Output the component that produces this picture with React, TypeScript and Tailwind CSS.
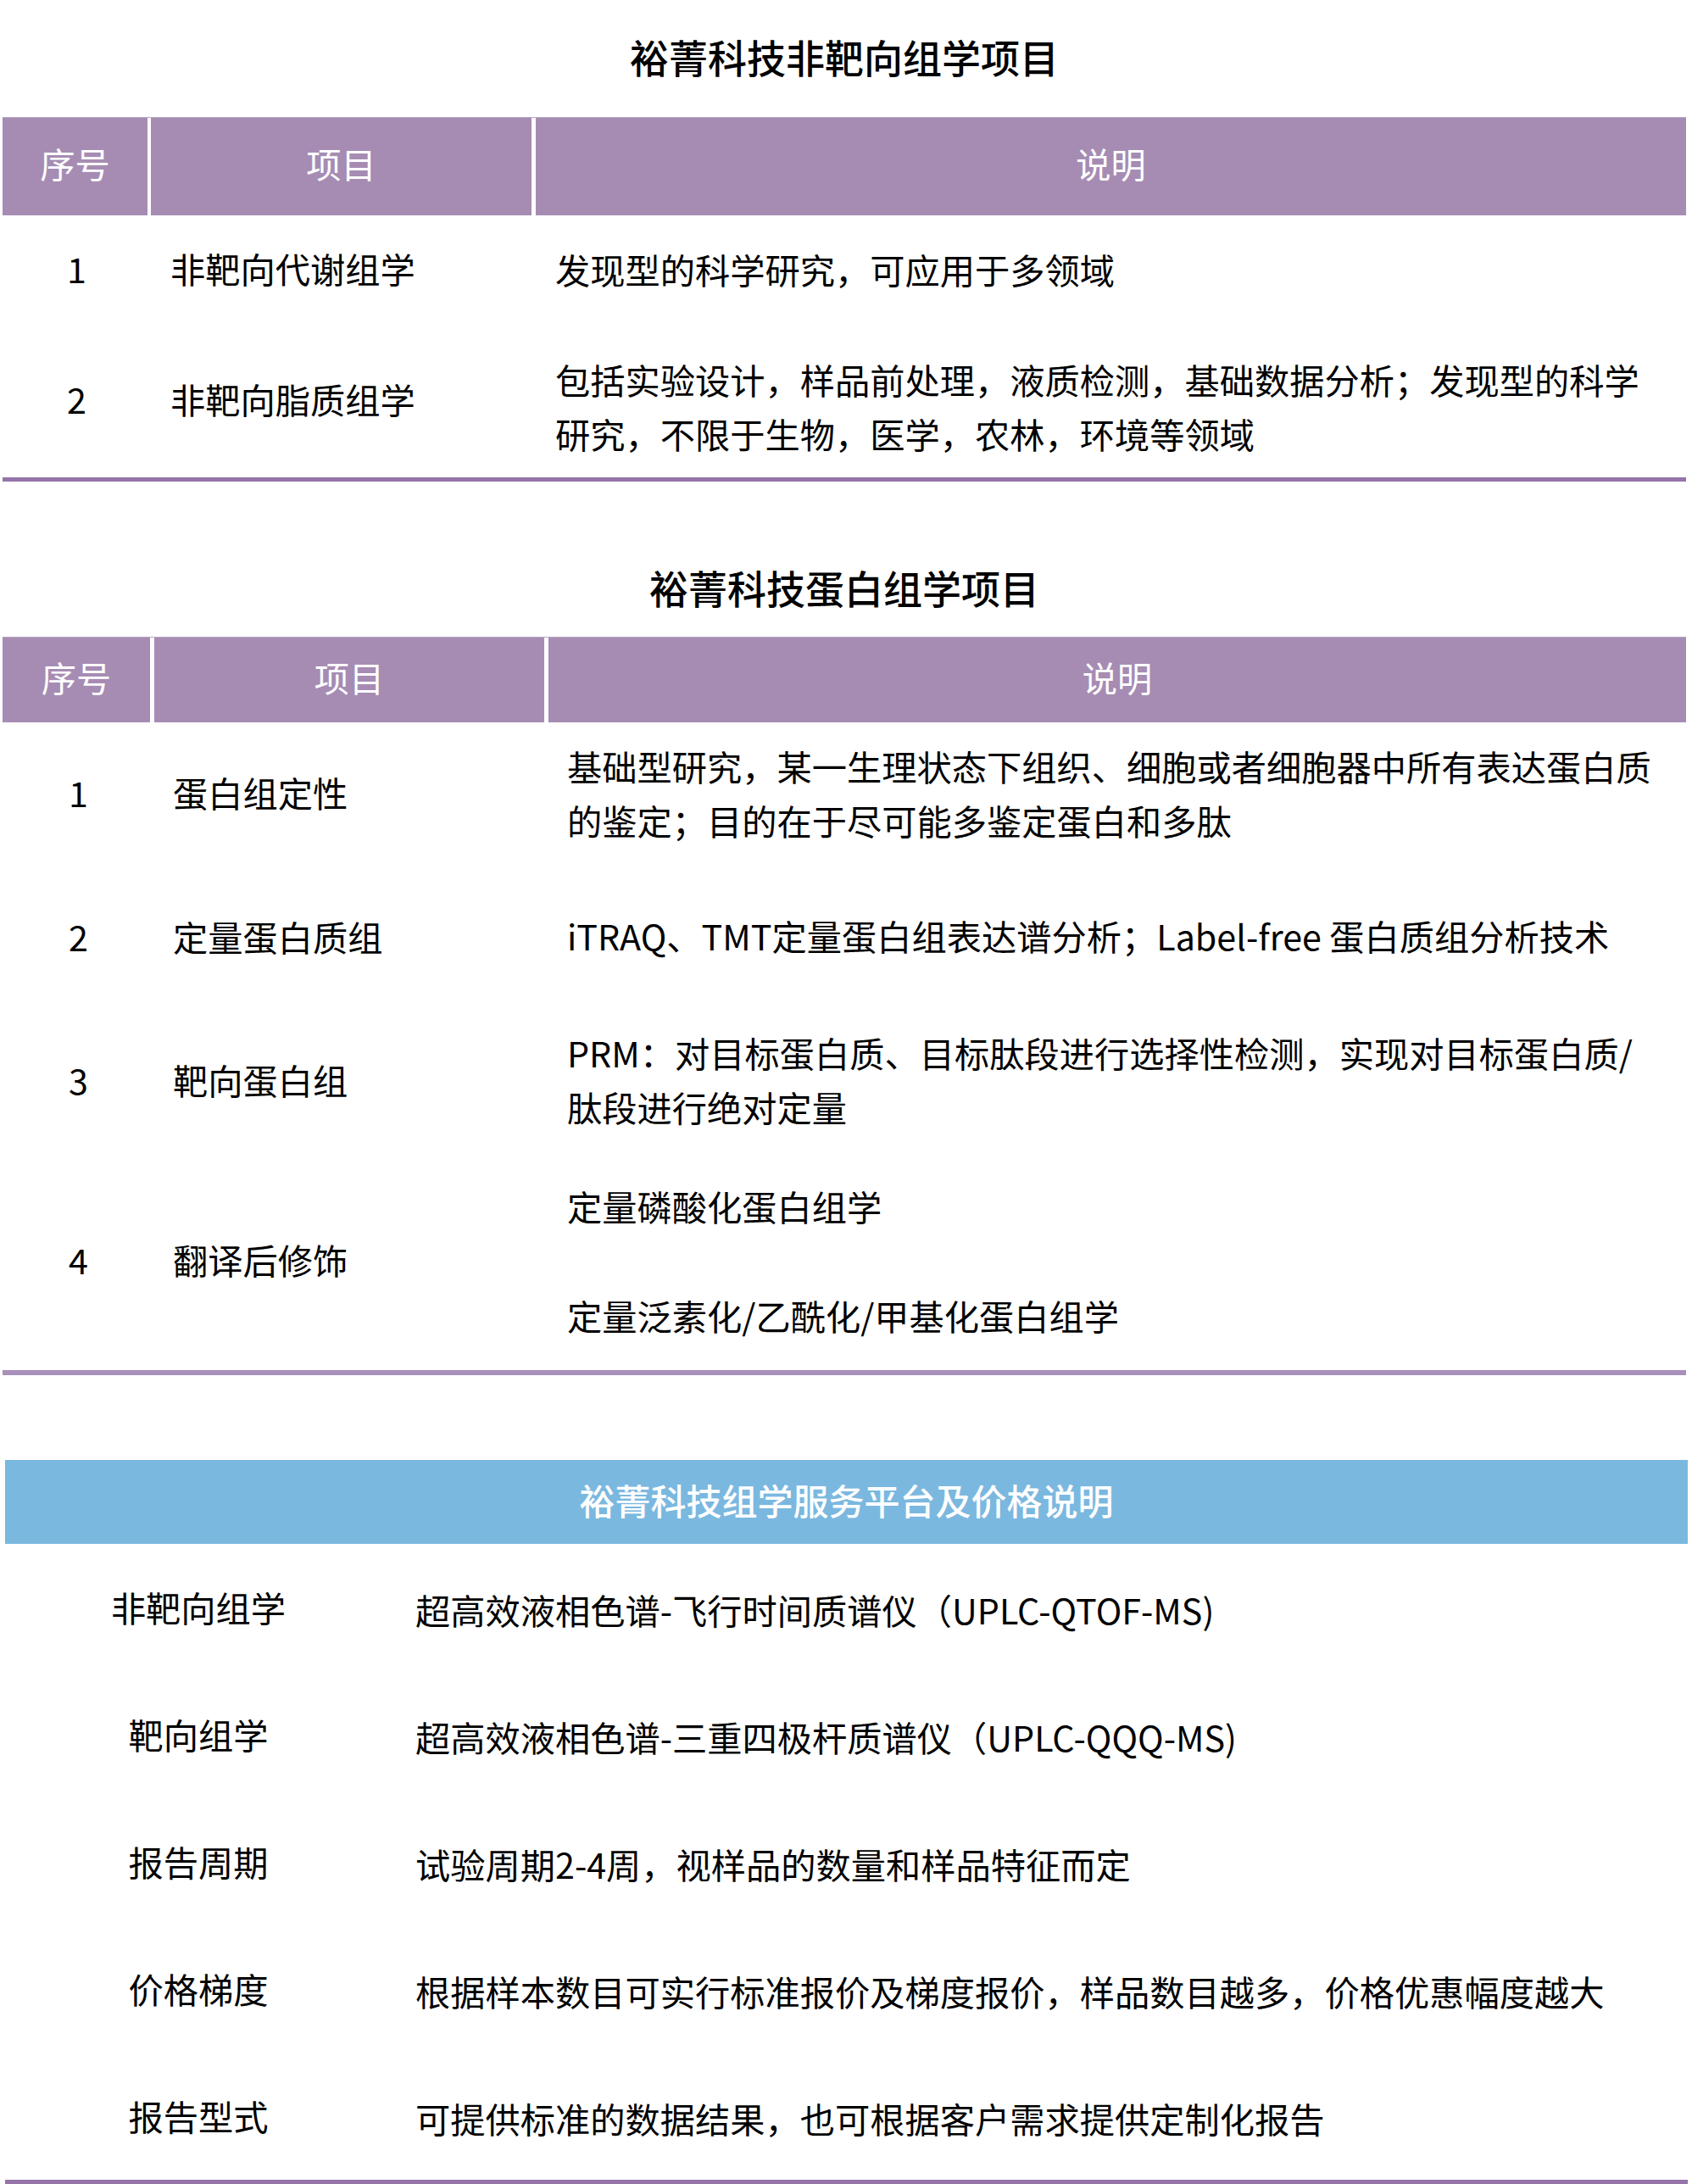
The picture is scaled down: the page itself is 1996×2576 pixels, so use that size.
import React from "react";

const FONT = "font-['Noto_Sans_CJK_SC','Noto_Sans',sans-serif]";

function Lines({ lines }: { lines: string[] }) {
  return (
    <div className="flex flex-col">
      {lines.map((l, i) => (
        <div key={i} className="whitespace-nowrap leading-[64px]">
          {l}
        </div>
      ))}
    </div>
  );
}

type Row = { n: string; item: string; desc: string[][]; h: string; shift?: string };

const metabolomics: Row[] = [
  { n: "1", item: "非靶向代谢组学", desc: [["发现型的科学研究，可应用于多领域"]], h: "h-[130px]" },
  {
    n: "2",
    item: "非靶向脂质组学",
    desc: [["包括实验设计，样品前处理，液质检测，基础数据分析；发现型的科学", "研究，不限于生物，医学，农林，环境等领域"]],
    h: "h-[179px]",
    shift: "pt-[16px]",
  },
];

const proteomics: Row[] = [
  {
    n: "1",
    item: "蛋白组定性",
    desc: [["基础型研究，某一生理状态下组织、细胞或者细胞器中所有表达蛋白质", "的鉴定；目的在于尽可能多鉴定蛋白和多肽"]],
    h: "h-[168px]",
    shift: "pt-[4px]",
  },
  { n: "2", item: "定量蛋白质组", desc: [["iTRAQ、TMT定量蛋白组表达谱分析；Label-free 蛋白质组分析技术"]], h: "h-[172px]" },
  {
    n: "3",
    item: "靶向蛋白组",
    desc: [["PRM：对目标蛋白质、目标肽段进行选择性检测，实现对目标蛋白质/", "肽段进行绝对定量"]],
    h: "h-[166px]",
    shift: "pt-[2px]",
  },
  {
    n: "4",
    item: "翻译后修饰",
    desc: [["定量磷酸化蛋白组学"], ["定量泛素化/乙酰化/甲基化蛋白组学"]],
    h: "h-[258px]",
    shift: "pt-[5px]",
  },
];

const platform = [
  { label: "非靶向组学", desc: "超高效液相色谱-飞行时间质谱仪（UPLC-QTOF-MS)" },
  { label: "靶向组学", desc: "超高效液相色谱-三重四极杆质谱仪（UPLC-QQQ-MS)" },
  { label: "报告周期", desc: "试验周期2-4周，视样品的数量和样品特征而定" },
  { label: "价格梯度", desc: "根据样本数目可实行标准报价及梯度报价，样品数目越多，价格优惠幅度越大" },
  { label: "报告型式", desc: "可提供标准的数据结果，也可根据客户需求提供定制化报告" },
];

export default function App() {
  return (
    <div className={`${FONT} w-[1996px] h-[2576px] bg-white text-black overflow-hidden`}>
      {/* Section 1 */}
      <div className="ml-[3px] w-[1986px]">
        <div className="h-[138px] flex items-center justify-center pb-[6px] text-[46px] font-medium leading-none">
          裕菁科技非靶向组学项目
        </div>
        <div className="h-[116px] flex gap-[4px] text-white text-[41.25px] border-t border-[#b9a6c3]">
          <div className="w-[171px] bg-[#a68cb3] flex items-center justify-center pb-[8px]">序号</div>
          <div className="w-[449px] bg-[#a68cb3] flex items-center justify-center pb-[8px]">项目</div>
          <div className="flex-1 ml-px bg-[#a68cb3] flex items-center justify-center pb-[8px]">说明</div>
        </div>
        {metabolomics.map((r) => (
          <div key={r.n} className={`${r.h} flex text-[41.25px]`}>
            <div className="w-[175px] flex items-center justify-center pb-[5px]">{r.n}</div>
            <div className="w-[454px] flex items-center pl-[23px] pb-[5px]">{r.item}</div>
            <div className={`flex-1 flex flex-col justify-center pl-[23px] pb-[5px] ${r.shift ?? ""}`}>
              {r.desc.map((d, i) => (
                <Lines key={i} lines={d} />
              ))}
            </div>
          </div>
        ))}
        <div className="h-[5px] bg-[#9474a9]" />
      </div>

      {/* Section 2 */}
      <div className="ml-[3px] w-[1986px] mt-[73px]">
        <div className="h-[110px] flex items-center justify-center pb-[8px] text-[46px] font-medium leading-none">
          裕菁科技蛋白组学项目
        </div>
        <div className="h-[101px] flex gap-[5px] text-white text-[41.25px] border-t border-[#b9a6c3]">
          <div className="w-[174px] bg-[#a68cb3] flex items-center justify-center pb-[6px]">序号</div>
          <div className="w-[460px] bg-[#a68cb3] flex items-center justify-center pb-[6px]">项目</div>
          <div className="flex-1 bg-[#a68cb3] flex items-center justify-center pb-[6px]">说明</div>
        </div>
        {proteomics.map((r) => (
          <div key={r.n} className={`${r.h} flex text-[41.25px]`}>
            <div className="w-[179px] flex items-center justify-center pb-[3px]">{r.n}</div>
            <div className="w-[465px] flex items-center pl-[22px] pb-[3px]">{r.item}</div>
            <div className={`flex-1 flex flex-col justify-center gap-[65px] pl-[22px] pb-[6px] ${r.shift ?? ""}`}>
              {r.desc.map((d, i) => (
                <Lines key={i} lines={d} />
              ))}
            </div>
          </div>
        ))}
        <div className="h-[6px] bg-[#a890ba]" />
      </div>

      {/* Section 3 */}
      <div className="ml-[6px] w-[1985px] mt-[100px]">
        <div className="h-[99px] bg-[#7bb8df] flex items-center justify-center pb-[6px] text-white text-[42px] font-medium">
          裕菁科技组学服务平台及价格说明
        </div>
        {platform.map((p) => (
          <div key={p.label} className="h-[150px] flex items-center text-[41.25px]">
            <div className="w-[456px] flex justify-center">{p.label}</div>
            <div className="flex-1 pl-[28px] pt-[6px] whitespace-nowrap">{p.desc}</div>
          </div>
        ))}
        <div className="h-[5px] bg-[#9474a9]" />
      </div>
    </div>
  );
}
